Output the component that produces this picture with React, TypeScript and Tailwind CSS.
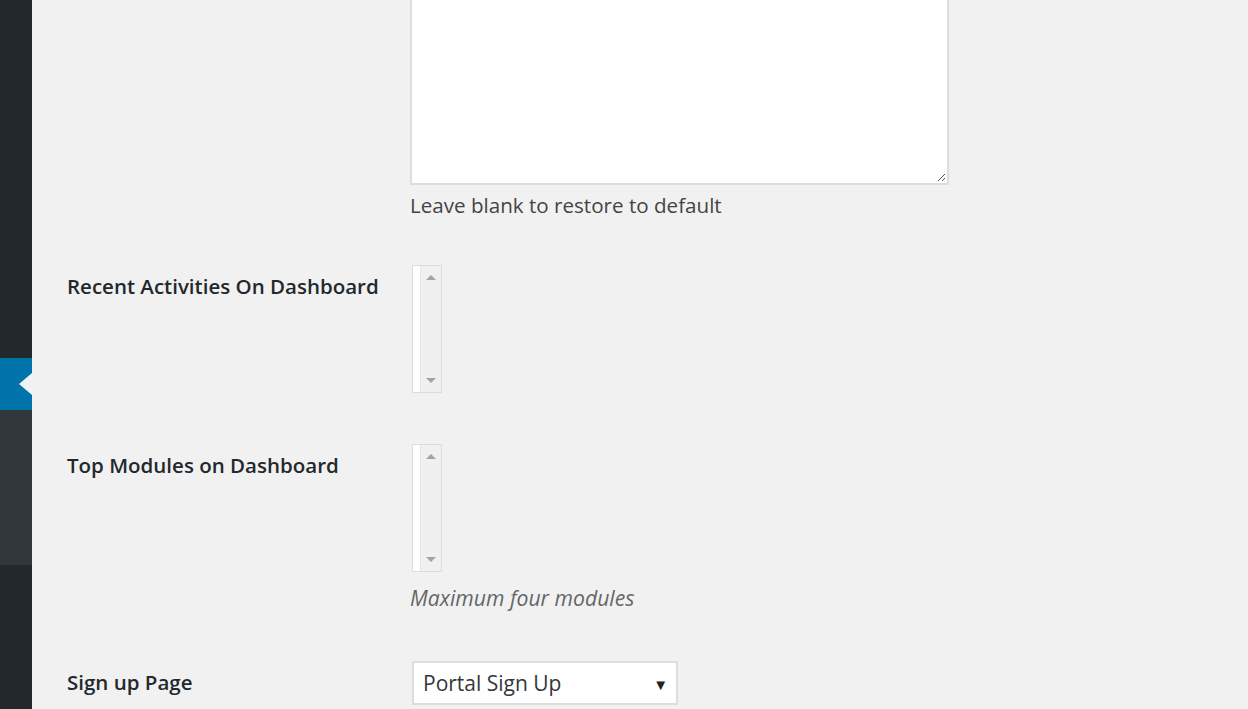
import React from "react";

const font = { fontFamily: '"Open Sans", "Noto Sans", "Liberation Sans", sans-serif' };

const ScrollList = () => (
  <div className="ml-[2px] flex h-[128px] w-[30px] border border-[#dcdcdc] bg-[#f0f0f0]">
    <div className="w-[7px] bg-white" />
    <div className="flex flex-1 flex-col items-center justify-between border-l border-[#e6e6e6] pb-[9px] pt-[9px]">
      <span className="h-0 w-0 border-x-[5px] border-b-[5px] border-x-transparent border-b-[#a3a3a3]" />
      <span className="h-0 w-0 border-x-[5px] border-t-[5px] border-x-transparent border-t-[#a3a3a3]" />
    </div>
  </div>
);

const Row = ({ label, children }: { label?: string; children: React.ReactNode }) => (
  <div className="flex">
    <div className="w-[343px] shrink-0 pt-[8px] text-[20.5px] font-semibold leading-[26px] text-[#23282d]">
      {label}
    </div>
    <div>{children}</div>
  </div>
);

export default function App() {
  return (
    <div className="flex h-[709px] w-[1248px] overflow-hidden bg-[#f1f1f1]" style={font}>
      <aside className="flex w-[32px] shrink-0 flex-col bg-[#23282d]">
        <div className="h-[358px]" />
        <div className="relative h-[52px] bg-[#0073aa]">
          <span className="absolute right-0 top-[15px] h-0 w-0 border-y-[11px] border-r-[13px] border-y-transparent border-r-[#f1f1f1]" />
        </div>
        <div className="h-[155px] bg-[#32373c]" />
      </aside>

      <main className="flex-1 pl-[35px]">
        <Row>
          <div className="relative -mt-[20px] h-[205px] w-[539px] border-2 border-[#dddddd] bg-white">
            <svg className="absolute bottom-[1px] right-[1px]" width="9" height="9" viewBox="0 0 9 9">
              <path d="M8 1L1 8M8 5L5 8" stroke="#555" strokeWidth="1" />
            </svg>
          </div>
          <p className="mt-[7px] text-[20.6px] leading-[26px] text-[#444]">Leave blank to restore to default</p>
        </Row>

        <div className="mt-[47px]">
          <Row label="Recent Activities On Dashboard">
            <ScrollList />
          </Row>
        </div>

        <div className="mt-[51px]">
          <Row label="Top Modules on Dashboard">
            <ScrollList />
            <p className="mt-[13px] text-[21.2px] italic leading-[26px] text-[#666]">Maximum four modules</p>
          </Row>
        </div>

        <div className="mt-[50px]">
          <Row label="Sign up Page">
            <div className="ml-[2px] flex h-[44px] w-[266px] items-center justify-between border-2 border-[#dddddd] bg-white pl-[9px] pr-[8px] pt-[2px]">
              <span className="text-[21px] text-[#32373c]">Portal Sign Up</span>
              <span className="text-[15px] text-[#222]">▼</span>
            </div>
          </Row>
        </div>
      </main>
    </div>
  );
}
